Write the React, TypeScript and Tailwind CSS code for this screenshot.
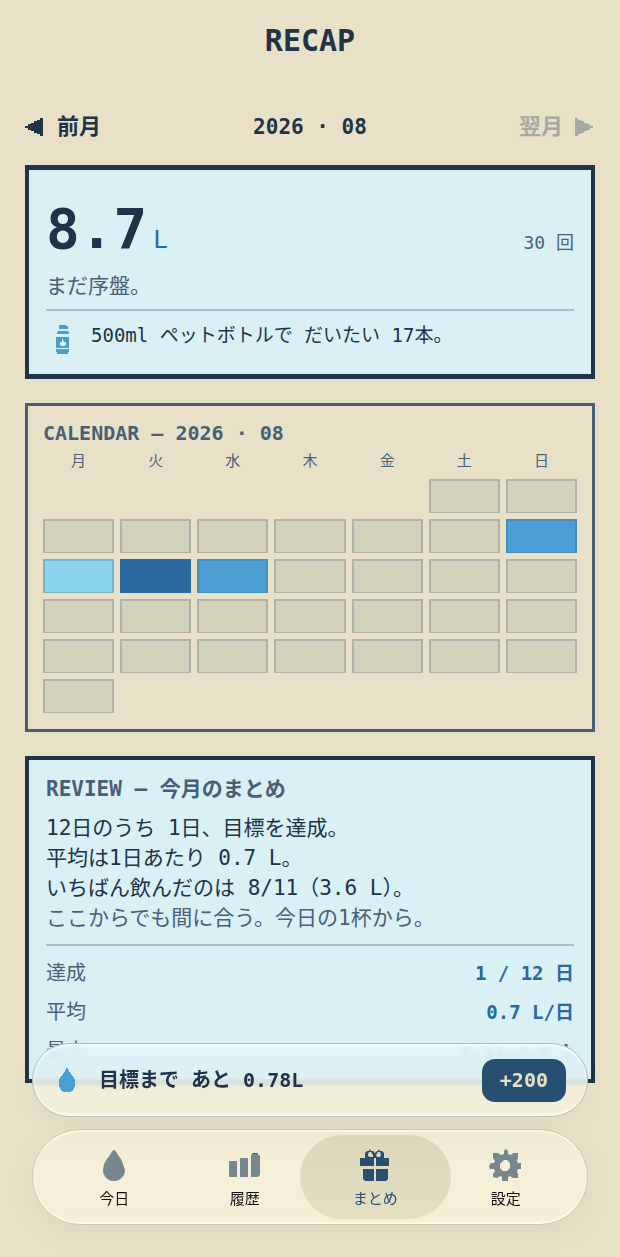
import { ReactNode } from 'react'
import clsx from 'clsx'

const WEEKDAYS = ['月', '火', '水', '木', '金', '土', '日']
const LEADING_BLANKS = 5
const DAYS_IN_MONTH = 31

type Level = 'none' | 'low' | 'mid' | 'high'

// Days with a record; every other day is drawn empty
const LEVELS: Record<number, Level> = { 9: 'mid', 10: 'low', 11: 'high', 12: 'mid' }

const LEVEL_CLASS: Record<Level, string> = {
  none: 'bg-[#d5d2bc] border-[#b0b3a9]',
  low: 'bg-[#8ad5eb] border-[#74b3cd]',
  mid: 'bg-[#4b9ed1] border-[#428dbe]',
  high: 'bg-[#2a6a9e] border-[#2a6a9e]',
}

const STATS = [
  { label: '達成', value: '1 / 12 日' },
  { label: '平均', value: '0.7 L/日' },
  { label: '最大', value: '8/11 3.6 L' },
]

function BottleIcon() {
  return (
    <svg width="13" height="29" viewBox="0 0 13 29" shapeRendering="crispEdges" aria-hidden="true">
      <path fill="#4b9ed1" d="M3 0h7v1h2v3H3zM2 6h10v1h1v2H1V7h1zM0 12h13v11H0zM0 24h13v3h-1v2H1v-2H0z" />
      <path fill="#d9f1f5" d="M6 14h1v2h1v1h2v3H9v1H5v-1H4v-3h2z" />
    </svg>
  )
}

function DropIcon() {
  return (
    <svg width="16" height="24" viewBox="0 0 16 24" shapeRendering="crispEdges" aria-hidden="true">
      <path
        fill="#4b9ed1"
        d="M7 0h2v2h1v2h1v1h1v2h1v1h1v1h1v2h1v8h-1v2h-1v2h-2v1H4v-1H2v-2H1v-2H0v-8h1V9h1V8h1V7h1V5h1V4h1V2h1z"
      />
    </svg>
  )
}

function TodayIcon() {
  return (
    <svg width="22" height="31" viewBox="0 0 22 31" fill="currentColor" aria-hidden="true">
      <path d="M11 0c1 0 1.800 1 2.300 2l1.700 3 3 4 2 5 2 6c0 6-4.500 11-11 11S0 26 0 20l1-6 3-5 3-4 1.700-3C9.300 1 10 0 11 0z" />
    </svg>
  )
}

function HistoryIcon() {
  return (
    <svg width="31" height="24" viewBox="0 0 31 24" fill="currentColor" aria-hidden="true">
      <path d="M0 8h8v16H0zM11 5h8v19h-8zM22 2l2-2h4l3 3v19l-2 2h-7z" />
      <path fill="#45535b" d="M24 0h4l1 1h-6z" />
    </svg>
  )
}

function GiftIcon() {
  return (
    <svg width="30" height="33" viewBox="0 0 30 33" fill="currentColor" aria-hidden="true">
      <path
        fillRule="evenodd"
        d="M5 9V4l2-2h2l1-2 1 2h2l2 2 2-2h1l1-2 1 2h2l2 2v5h5v8H16V9h-2v8H0V9zM10 8h3V6l-2-3H9L8 5v2zM17 8h3l1-2-1-3h-2l-2 3z"
      />
      <path d="M3 20h11v12H5l-2-2zM16 20h12v10l-2 2H16z" />
    </svg>
  )
}

function SettingsIcon() {
  return (
    <svg width="33" height="33" viewBox="0 0 33 33" fill="currentColor" aria-hidden="true">
      <path
        fillRule="evenodd"
        d="M15 2l2-2 2 2v3l3 1 2-2h5v5l-1 3 1 2h3v6h-3l-1 2 1 3v4h-5l-3-2-2 1v4h-6v-4l-2-1-3 2-4-1v-3l2-3-1-2H1l-1-3 2-3h3l1-2-2-3V4h5l3 2 3-1zM15 11l-4 4v4l3 3h4l3-3v-5l-3-3z"
      />
    </svg>
  )
}

interface PanelProps {
  children: ReactNode
  label: string
  className: string
}

function Panel({ children, label, className }: PanelProps) {
  return (
    <section aria-label={label} className={className}>
      {children}
    </section>
  )
}

function Calendar() {
  return (
    <div className="grid grid-cols-7 gap-x-1.5">
      {WEEKDAYS.map((d) => (
        <div key={d} className="pb-1.5 text-center text-[15px] leading-6 text-[#4a5f77]">
          {d}
        </div>
      ))}
      {Array.from({ length: LEADING_BLANKS }, (_, i) => (
        <div key={`blank-${i}`} />
      ))}
      {Array.from({ length: DAYS_IN_MONTH }, (_, i) => (
        <div
          key={i + 1}
          className={clsx('mb-1.5 h-[34px] border border-x-2 border-t-2', LEVEL_CLASS[LEVELS[i + 1] ?? 'none'])}
        />
      ))}
    </div>
  )
}

const TABS = [
  { label: '今日', icon: <TodayIcon />, active: false },
  { label: '履歴', icon: <HistoryIcon />, active: false },
  { label: 'まとめ', icon: <GiftIcon />, active: true },
  { label: '設定', icon: <SettingsIcon />, active: false },
]

function TabBar() {
  return (
    <nav className="flex h-24 rounded-full border border-[#cdc7aa] bg-linear-to-b from-[#efebd2] via-[#f6f0d9] via-40% to-[#f5efd7] px-4 py-[5px] shadow-[inset_0_2px_2px_#fffde6,inset_0_-2px_2px_#fffde6,0_8px_28px_rgba(80,70,30,0.06)]">
      {TABS.map((t) => (
        <a
          key={t.label}
          href="#"
          aria-current={t.active ? 'page' : undefined}
          className={clsx(
            'flex flex-1 flex-col items-center text-[15px] leading-5',
            t.active
              ? '-mx-2.5 rounded-full bg-linear-to-b from-[#ded8bb] to-[#e3dfc1] px-2.5 text-[#264f72]'
              : 'text-[#111111]',
          )}
        >
          <span className={clsx('flex h-[60px] items-center', t.active ? 'text-[#264f72]' : 'text-[#778790]')}>
            {t.icon}
          </span>
          <span className="-mt-1.5">{t.label}</span>
        </a>
      ))}
    </nav>
  )
}

function GoalBar() {
  return (
    <div className="flex h-[74px] items-center rounded-full border border-[#b4bfbd] bg-[linear-gradient(to_bottom,#e2f7fcf0_0%,#dbf0f6f0_25%,#dff0f1f4_48%,#d9e4dffa_51%,#dde5dafa_56%,#efecd8f8_59%,#f3f0daf8_100%)] pr-[21px] pl-[26px] shadow-[inset_0_2px_2px_#f4ffff,inset_0_-2px_2px_#fffde6,0_8px_20px_rgba(80,70,30,0.04)] backdrop-blur-[2px]">
      <DropIcon />
      <p className="ml-6 flex-1 text-[20px] font-bold">目標まで あと 0.78L</p>
      <button className="h-[43px] rounded-[13px] bg-[#264f72] px-[18px] text-[20px] font-bold text-[#e8e1c8]">
        +200
      </button>
    </div>
  )
}

export default function App() {
  return (
    <div className="min-h-screen bg-[#e8e1c8] px-[25px] pb-[173px] font-['DejaVu_Sans_Mono','Noto_Sans_CJK_JP',monospace] text-[#203348]">
      <header className="flex h-20 items-center justify-center">
        <h1 className="text-[30px] font-bold">RECAP</h1>
      </header>

      <div className="mt-5 grid grid-cols-3 items-center pt-1.5 pb-[17px] text-[22px] leading-[42px] font-bold">
        <button className="flex items-center gap-3.5 justify-self-start">
          <svg width="18" height="18" viewBox="0 0 18 18" fill="currentColor" shapeRendering="crispEdges" aria-hidden="true">
            <path d="M18 0v18h-3v-2h-3v-1H9v-2H6v-1H3v-2H0V8h3V6h3V5h3V3h3V2h3V0z" />
          </svg>
          前月
        </button>
        <p className="text-center text-[21px]">2026 · 08</p>
        <button disabled className="flex items-center gap-3 justify-self-end pr-0.5 text-[#a6aaa3]">
          翌月
          <svg width="18" height="18" viewBox="0 0 18 18" fill="currentColor" shapeRendering="crispEdges" aria-hidden="true">
            <path d="M0 0v18h3v-2h3v-1h3v-2h3v-1h3v-2h3V8h-3V6h-3V5H9V3H6V2H3V0z" />
          </svg>
        </button>
      </div>

      <main className="flex flex-col gap-6">
        <Panel
          label="今月の合計"
          className="border-4 border-y-[5px] border-[#203348] bg-[#d9f1f5] px-[17px] pt-[23px] pb-5"
        >
          <div className="flex items-end justify-between">
            <p className="flex items-baseline gap-1.5">
              <span className="text-[56px] leading-[72px] font-bold">8.7</span>
              <span className="text-[24px] text-[#2a6a9e]">L</span>
            </p>
            <p className="pb-2 text-[18px] leading-7 text-[#4a5f77]">30 回</p>
          </div>
          <p className="text-[21px] leading-[42px] text-[#4a5f77]">まだ序盤。</p>
          <div className="mt-0.5 flex gap-[22px] border-t-2 border-[#a9bfca] pt-2 pl-2.5">
            <div className="pt-1.5">
              <BottleIcon />
            </div>
            <p className="text-[19px] leading-8">500ml ペットボトルで だいたい 17本。</p>
          </div>
        </Panel>

        <Panel label="カレンダー" className="border-3 border-[#4a5f77] px-[15px] pt-[11px] pb-2.5">
          <h2 className="text-[20px] leading-8 font-bold text-[#4a5f77]">CALENDAR — 2026 · 08</h2>
          <Calendar />
        </Panel>

        <Panel label="今月のまとめ" className="border-4 border-[#203348] bg-[#d9f1f5] px-[17px] pt-[13px] pb-2">
          <h2 className="text-[21px] leading-8 font-bold text-[#4a5f77]">REVIEW — 今月のまとめ</h2>
          <div className="mt-2 text-[21px] leading-[30px]">
            <p>12日のうち 1日、目標を達成。</p>
            <p>平均は1日あたり 0.7 L。</p>
            <p>いちばん飲んだのは 8/11（3.6 L）。</p>
            <p className="text-[#4a5f77]">ここからでも間に合う。今日の1杯から。</p>
          </div>
          <dl className="mt-[11px] border-t-2 border-[#a9bfca] pt-2">
            {STATS.map((s) => (
              <div key={s.label} className="flex items-center justify-between leading-[39px]">
                <dt className="text-[20px] text-[#4a5f77]">{s.label}</dt>
                <dd className="text-[19px] font-bold text-[#2a6a9e]">{s.value}</dd>
              </div>
            ))}
          </dl>
        </Panel>
      </main>

      <div className="fixed inset-x-8 bottom-8 flex flex-col gap-3">
        <GoalBar />
        <TabBar />
      </div>
    </div>
  )
}
